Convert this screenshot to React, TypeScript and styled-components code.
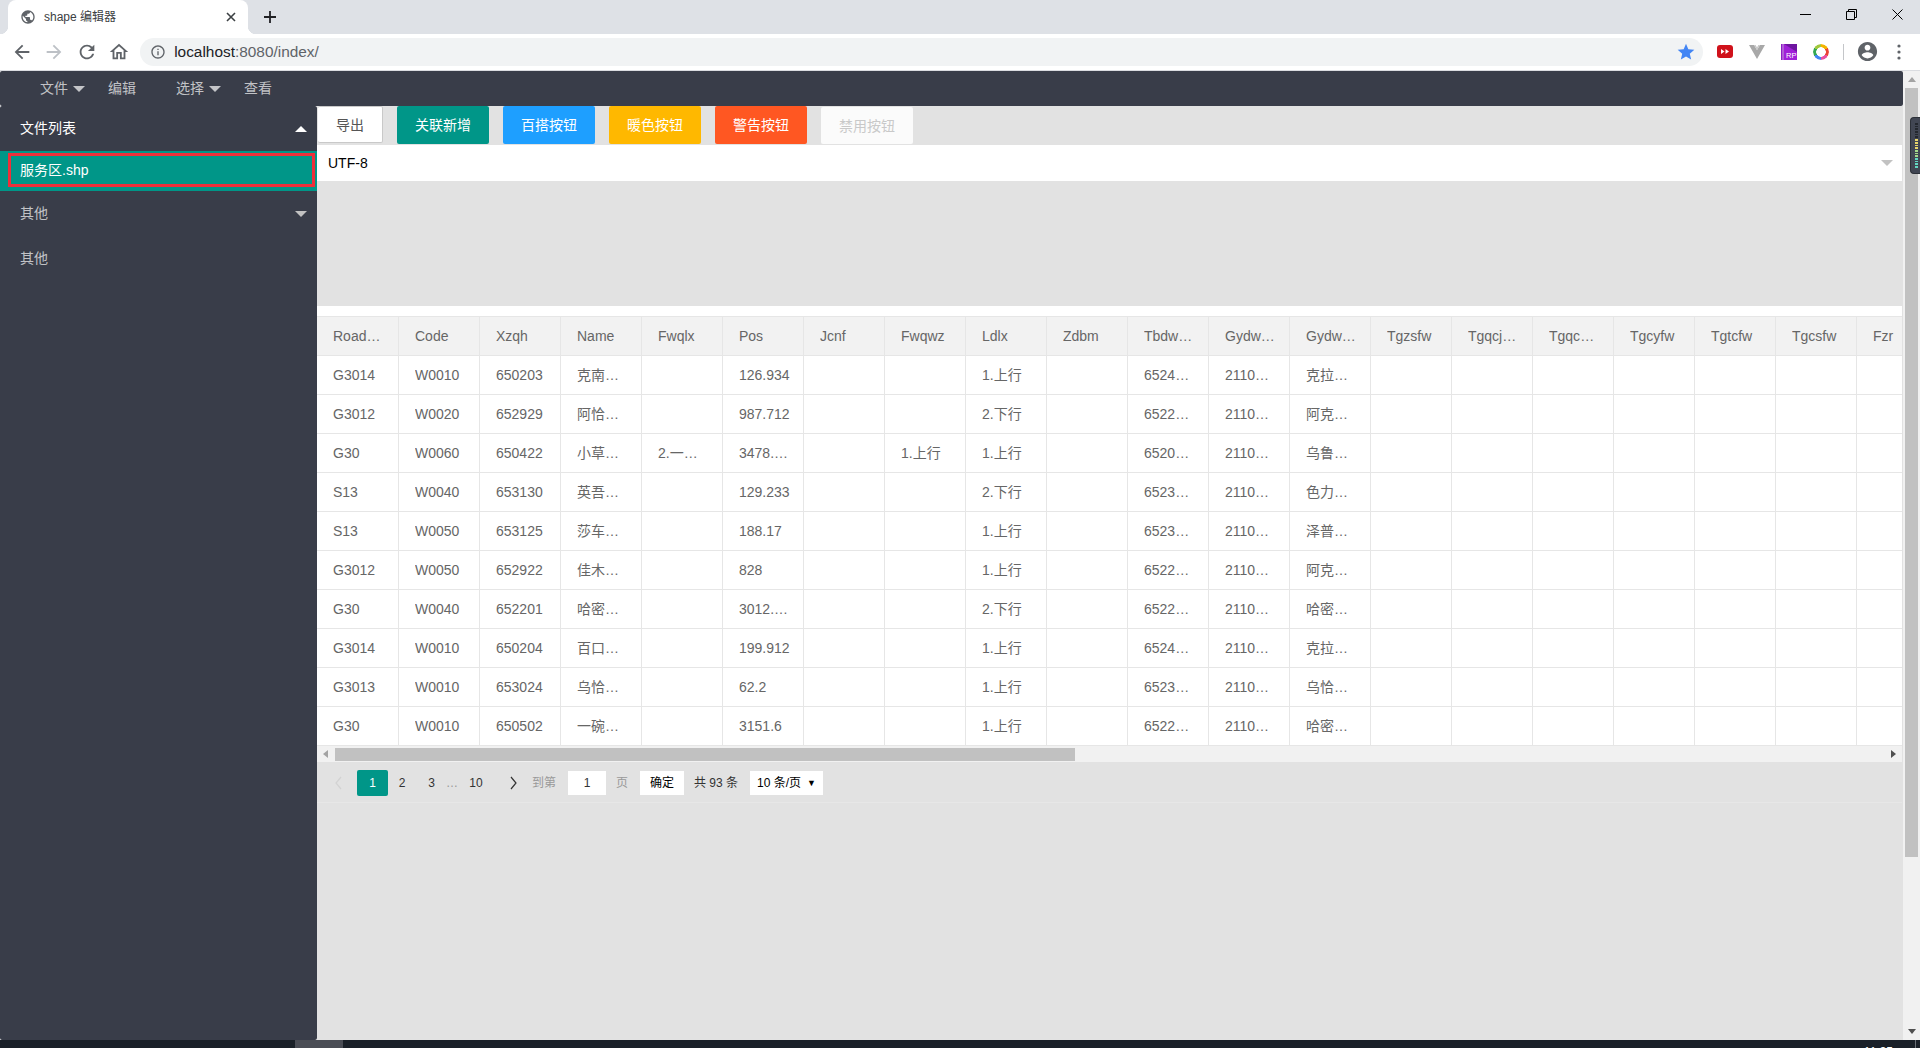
import * as React from "react";
import styled, { createGlobalStyle } from "styled-components";

// Table data
const columns = [
  "RoadCode", "Code", "Xzqh", "Name", "Fwqlx", "Pos", "Jcnf", "Fwqwz", "Ldlx", "Zdbm",
  "Tbdwdm", "Gydwdm", "Gydwmc", "Tgzsfw", "Tgqcjcfw", "Tgqcxfw", "Tgcyfw", "Tgtcfw", "Tgcsfw", "Fzr",
];

const rows = [
  { RoadCode: "G3014", Code: "W0010", Xzqh: "650203", Name: "克南服务区", Pos: "126.934", Ldlx: "1.上行", Tbdwdm: "652400000", Gydwdm: "211000000", Gydwmc: "克拉玛依公路局" },
  { RoadCode: "G3012", Code: "W0020", Xzqh: "652929", Name: "阿恰服务区", Pos: "987.712", Ldlx: "2.下行", Tbdwdm: "652200000", Gydwdm: "211000000", Gydwmc: "阿克苏公路局" },
  { RoadCode: "G30", Code: "W0060", Xzqh: "650422", Name: "小草湖服务区", Fwqlx: "2.一般服务区", Pos: "3478.256", Fwqwz: "1.上行", Ldlx: "1.上行", Tbdwdm: "652000000", Gydwdm: "211000000", Gydwmc: "乌鲁木齐公路局" },
  { RoadCode: "S13", Code: "W0040", Xzqh: "653130", Name: "英吾斯坦服务区", Pos: "129.233", Ldlx: "2.下行", Tbdwdm: "652300000", Gydwdm: "211000000", Gydwmc: "色力布亚公路局" },
  { RoadCode: "S13", Code: "W0050", Xzqh: "653125", Name: "莎车服务区", Pos: "188.17", Ldlx: "1.上行", Tbdwdm: "652300000", Gydwdm: "211000000", Gydwmc: "泽普公路局" },
  { RoadCode: "G3012", Code: "W0050", Xzqh: "652922", Name: "佳木服务区", Pos: "828", Ldlx: "1.上行", Tbdwdm: "652200000", Gydwdm: "211000000", Gydwmc: "阿克苏公路局" },
  { RoadCode: "G30", Code: "W0040", Xzqh: "652201", Name: "哈密服务区", Pos: "3012.455", Ldlx: "2.下行", Tbdwdm: "652200000", Gydwdm: "211000000", Gydwmc: "哈密公路局" },
  { RoadCode: "G3014", Code: "W0010", Xzqh: "650204", Name: "百口泉服务区", Pos: "199.912", Ldlx: "1.上行", Tbdwdm: "652400000", Gydwdm: "211000000", Gydwmc: "克拉玛依公路局" },
  { RoadCode: "G3013", Code: "W0010", Xzqh: "653024", Name: "乌恰服务区", Pos: "62.2", Ldlx: "1.上行", Tbdwdm: "652300000", Gydwdm: "211000000", Gydwmc: "乌恰公路局" },
  { RoadCode: "G30", Code: "W0010", Xzqh: "650502", Name: "一碗泉服务区", Pos: "3151.6", Ldlx: "1.上行", Tbdwdm: "652200000", Gydwdm: "211000000", Gydwmc: "哈密公路局" },
];

const actions = [
  { label: "关联新增", color: "#009688" },
  { label: "百搭按钮", color: "#1e9fff" },
  { label: "暖色按钮", color: "#ffb800" },
  { label: "警告按钮", color: "#ff5722" },
];

const meterBars = ["d", "d", "d", "d", "d", "d", "y", "y", "y", "y", "g", "g", "g", "t", "t", "t", "t"];
const meterColors: Record<string, string> = { d: "#23272e", y: "#e8d56a", g: "#a5d98a", t: "#62d6c2" };

const App = () => (
  <Page>
    <GlobalStyle />
    <TabStrip>
      <Tab>
        <Icon $size={16} $color="#5f6368" viewBox="0 0 24 24">
          <path d="M12 2C6.48 2 2 6.48 2 12s4.48 10 10 10 10-4.48 10-10S17.52 2 12 2zm-1 17.93c-3.95-.49-7-3.85-7-7.93 0-.62.08-1.21.21-1.79L9 15v1c0 1.1.9 2 2 2v1.93zm6.9-2.54c-.26-.81-1-1.39-1.9-1.39h-1v-3c0-.55-.45-1-1-1H8v-2h2c.55 0 1-.45 1-1V7h2c1.1 0 2-.9 2-2v-.41c2.93 1.19 5 4.06 5 7.41 0 2.08-.8 3.97-2.1 5.39z" />
        </Icon>
        <TabTitle>shape 编辑器</TabTitle>
        <Icon $size={10} $color="#3c4043" viewBox="0 0 10 10">
          <path d="M1 1l8 8M9 1L1 9" stroke="#3c4043" strokeWidth="1.6" fill="none" />
        </Icon>
      </Tab>
      <NewTab>
        <Icon $size={14} $color="#202124" viewBox="0 0 14 14">
          <path d="M7 1v12M1 7h12" stroke="#202124" strokeWidth="1.8" fill="none" />
        </Icon>
      </NewTab>
      <WindowControls>
        <WindowButton>
          <svg width="11" height="11" viewBox="0 0 11 11"><path d="M0 5.5h11" stroke="#000" fill="none" /></svg>
        </WindowButton>
        <WindowButton>
          <svg width="11" height="11" viewBox="0 0 11 11"><path d="M.5 2.5h8v8h-8zM2.5 2.5v-2h8v8h-2" stroke="#000" fill="none" /></svg>
        </WindowButton>
        <WindowButton>
          <svg width="11" height="11" viewBox="0 0 11 11"><path d="M.5.5l10 10M10.5.5l-10 10" stroke="#000" fill="none" /></svg>
        </WindowButton>
      </WindowControls>
    </TabStrip>

    <BrowserBar>
      <NavButton>
        <Icon $size={22} $color="#5f6368" viewBox="0 0 24 24">
          <path d="M20 11H7.83l5.59-5.59L12 4l-8 8 8 8 1.41-1.41L7.83 13H20v-2z" />
        </Icon>
      </NavButton>
      <NavButton>
        <Icon $size={22} $color="#bdc1c6" viewBox="0 0 24 24">
          <path d="M4 11h12.17l-5.59-5.59L12 4l8 8-8 8-1.41-1.41L16.17 13H4v-2z" />
        </Icon>
      </NavButton>
      <NavButton>
        <Icon $size={22} $color="#5f6368" viewBox="0 0 24 24">
          <path d="M17.65 6.35A7.958 7.958 0 0 0 12 4c-4.42 0-7.99 3.58-7.99 8s3.57 8 7.99 8c3.73 0 6.84-2.55 7.73-6h-2.08A5.99 5.99 0 0 1 12 18c-3.31 0-6-2.69-6-6s2.69-6 6-6c1.66 0 3.14.69 4.22 1.78L13 11h7V4l-2.35 2.35z" />
        </Icon>
      </NavButton>
      <NavButton>
        <Icon $size={22} $color="#5f6368" viewBox="0 0 24 24">
          <path d="M12 5.69l5 4.5V18h-2v-6H9v6H7v-7.81l5-4.5M12 3L2 12h3v8h6v-6h2v6h6v-8h3L12 3z" />
        </Icon>
      </NavButton>
      <AddressBar>
        <Icon $size={16} $color="#5f6368" viewBox="0 0 24 24">
          <path d="M11 7h2v2h-2zm0 4h2v6h-2zm1-9C6.48 2 2 6.48 2 12s4.48 10 10 10 10-4.48 10-10S17.52 2 12 2zm0 18c-4.41 0-8-3.59-8-8s3.59-8 8-8 8 3.59 8 8-3.59 8-8 8z" />
        </Icon>
        <Url>
          localhost<UrlRest>:8080/index/</UrlRest>
        </Url>
        <Star $size={20} $color="#4285f4" viewBox="0 0 24 24">
          <path d="M12 17.27L18.18 21l-1.64-7.03L22 9.24l-7.19-.61L12 2 9.19 8.63 2 9.24l5.46 4.73L5.82 21z" />
        </Star>
      </AddressBar>
      <ExtensionSlot>
        <svg width="16" height="13" viewBox="0 0 16 13">
          <rect width="16" height="13" rx="3" fill="#d0121b" />
          <path d="M4 4l3.5 2.5L4 9zM8.5 4L12 6.5 8.5 9z" fill="#fff" />
        </svg>
      </ExtensionSlot>
      <ExtensionSlot>
        <svg width="16" height="14" viewBox="0 0 16 14">
          <path d="M0 0h5l3 5 3-5h5L8 14z" fill="#a8a8a8" />
          <path d="M5 0l3 5 3-5h-1.6L8 2.4 6.6 0z" fill="#c8c8c8" />
        </svg>
      </ExtensionSlot>
      <ExtensionSlot>
        <svg width="16" height="16" viewBox="0 0 16 16">
          <rect width="16" height="16" fill="#8a1fc2" />
          <path d="M3 0h13v16H3z" fill="#a020d8" />
          <path d="M3 0l13 8V0z" fill="#6e16a0" />
          <path d="M2 0v16" stroke="#e9c4f5" strokeWidth=".8" />
          <text x="5" y="14" fontSize="7.5" fontFamily="Liberation Sans, sans-serif" fill="#fff">RP</text>
        </svg>
      </ExtensionSlot>
      <ExtensionSlot>
        <ColorRing />
      </ExtensionSlot>
      <BarDivider />
      <ExtensionSlot>
        <Icon $size={23} $color="#5f6368" viewBox="0 0 24 24">
          <path d="M12 2C6.48 2 2 6.48 2 12s4.48 10 10 10 10-4.48 10-10S17.52 2 12 2zm0 3c1.66 0 3 1.34 3 3s-1.34 3-3 3-3-1.34-3-3 1.34-3 3-3zm0 14.2c-2.5 0-4.71-1.28-6-3.22.03-1.99 4-3.08 6-3.08 1.99 0 5.97 1.09 6 3.08-1.29 1.94-3.5 3.22-6 3.22z" />
        </Icon>
      </ExtensionSlot>
      <ExtensionSlot>
        <svg width="4" height="16" viewBox="0 0 4 16">
          <circle cx="2" cy="2" r="1.6" fill="#5f6368" />
          <circle cx="2" cy="8" r="1.6" fill="#5f6368" />
          <circle cx="2" cy="14" r="1.6" fill="#5f6368" />
        </svg>
      </ExtensionSlot>
    </BrowserBar>

    <Viewport>
      <Content>
        <MenuBar>
          <MenuItem><MenuLabel>文件</MenuLabel><Caret $dir="down" $color="rgba(255,255,255,.7)" $gap={5} /></MenuItem>
          <MenuItem><MenuLabel>编辑</MenuLabel></MenuItem>
          <MenuItem><MenuLabel>选择</MenuLabel><Caret $dir="down" $color="rgba(255,255,255,.7)" $gap={5} /></MenuItem>
          <MenuItem><MenuLabel>查看</MenuLabel></MenuItem>
        </MenuBar>
        <Body>
          <Sidebar>
            <SideHead $active>
              <SideLabel>文件列表</SideLabel>
              <Caret $dir="up" $color="#fff" />
            </SideHead>
            <SideActive>
              <SideActiveInner>服务区.shp</SideActiveInner>
            </SideActive>
            <SideHead>
              <SideLabel>其他</SideLabel>
              <Caret $dir="down" $color="#c2c2c2" />
            </SideHead>
            <SideHead>
              <SideLabel>其他</SideLabel>
            </SideHead>
          </Sidebar>

          <Main>
            <ButtonRow>
              <PlainButton>导出</PlainButton>
              {actions.map((a) => (
                <ActionButton key={a.label} $color={a.color}>
                  {a.label}
                </ActionButton>
              ))}
              <DisabledButton>禁用按钮</DisabledButton>
            </ButtonRow>
            <EncodingSelect>
              UTF-8
              <Caret $dir="down" $color="#c2c2c2" />
            </EncodingSelect>
            <EmptyPanel />
            <TableBlock>
              <TableClip>
                <DataTable>
                  <colgroup>
                    {columns.map((c, i) => (
                      <col key={c} width={i === 0 ? 82 : 81} />
                    ))}
                  </colgroup>
                  <thead>
                    <tr>
                      {columns.map((c) => (
                        <HeadCell key={c}>
                          <CellText>{c}</CellText>
                        </HeadCell>
                      ))}
                    </tr>
                  </thead>
                  <tbody>
                    {rows.map((row, i) => (
                      <tr key={i}>
                        {columns.map((c) => (
                          <BodyCell key={c}>
                            <CellText>{(row as Record<string, string>)[c]}</CellText>
                          </BodyCell>
                        ))}
                      </tr>
                    ))}
                  </tbody>
                </DataTable>
              </TableClip>
              <TableScrollbar>
                <ScrollArrow>
                  <Caret $dir="left" $color="#a3a3a3" $small />
                </ScrollArrow>
                <TableThumb />
                <ScrollArrow>
                  <Caret $dir="right" $color="#505050" $small />
                </ScrollArrow>
              </TableScrollbar>
            </TableBlock>
            <Pagination>
              <PagerItem $w={37} $muted>
                <Icon $size={16} $color="none" viewBox="0 0 16 16">
                  <path d="M10 2L5 8l5 6" stroke="#d2d2d2" strokeWidth="1.2" fill="none" />
                </Icon>
              </PagerItem>
              <PagerCurrent>1</PagerCurrent>
              <PagerItem $w={28}>2</PagerItem>
              <PagerItem $w={31}>3</PagerItem>
              <PagerItem $w={10} $muted>…</PagerItem>
              <PagerItem $w={38}>10</PagerItem>
              <PagerItem $w={36}>
                <Icon $size={16} $color="none" viewBox="0 0 16 16">
                  <path d="M6 2l5 6-5 6" stroke="#333" strokeWidth="1.2" fill="none" />
                </Icon>
              </PagerItem>
              <PagerLabel $left={1}>到第</PagerLabel>
              <PagerInput>1</PagerInput>
              <PagerLabel $left={10}>页</PagerLabel>
              <PagerConfirm>确定</PagerConfirm>
              <PagerCount>共 93 条</PagerCount>
              <PagerSize>
                10 条/页
                <SizeMark>▼</SizeMark>
              </PagerSize>
            </Pagination>
          </Main>
        </Body>
      </Content>

      <PageScrollbar>
        <PageArrow>
          <Caret $dir="up" $color="#a3a3a3" $small />
        </PageArrow>
        <PageThumb />
        <PageArrow>
          <Caret $dir="down" $color="#505050" $small />
        </PageArrow>
      </PageScrollbar>

      <MeterWidget>
        {meterBars.map((b, i) => (
          <MeterBar key={i} $color={meterColors[b]} />
        ))}
      </MeterWidget>
    </Viewport>

    <Taskbar>
      <TaskbarApp />
      <TaskbarClock>11:35</TaskbarClock>
      <TaskbarEdge />
    </Taskbar>
  </Page>
);

// Styling
const GlobalStyle = createGlobalStyle`
  html, body {
    margin: 0;
    padding: 0;
    height: 100%;
    overflow: hidden;
    background: #fff;
    font-family: "Liberation Sans", "Noto Sans CJK SC", sans-serif;
    line-height: 20px;
  }
  * {
    box-sizing: border-box;
  }
`;

const Page = styled.div`
  width: 1920px;
  height: 1048px;
  display: flex;
  flex-direction: column;
  overflow: hidden;
`;

const Icon = styled.svg<{ $size: number; $color: string }>`
  width: ${(p) => p.$size}px;
  height: ${(p) => p.$size}px;
  flex: none;
  fill: ${(p) => p.$color};
`;

const Caret = styled.i<{ $dir: "up" | "down" | "left" | "right"; $color: string; $gap?: number; $small?: boolean }>`
  display: inline-block;
  flex: none;
  width: 0;
  height: 0;
  margin-left: ${(p) => p.$gap ?? 0}px;
  ${(p) => {
    const w = p.$small ? 4 : 6;
    const h = p.$small ? 5 : 6;
    const side = `${w}px solid transparent`;
    const solid = `${h}px solid ${p.$color}`;
    if (p.$dir === "up") return `border-left: ${side}; border-right: ${side}; border-bottom: ${solid};`;
    if (p.$dir === "down") return `border-left: ${side}; border-right: ${side}; border-top: ${solid};`;
    if (p.$dir === "left") return `border-top: ${side}; border-bottom: ${side}; border-right: ${solid};`;
    return `border-top: ${side}; border-bottom: ${side}; border-left: ${solid};`;
  }}
`;

const TabStrip = styled.div`
  height: 34px;
  flex: none;
  display: flex;
  align-items: stretch;
  background: #dee1e6;
  padding-left: 8px;
`;

const Tab = styled.div`
  position: relative;
  width: 240px;
  background: #fff;
  border-radius: 8px 8px 0 0;
  display: flex;
  align-items: center;
  padding: 0 12px 0 12px;

  &::before,
  &::after {
    content: "";
    position: absolute;
    bottom: 0;
    width: 8px;
    height: 8px;
  }
  &::before {
    left: -8px;
    background: radial-gradient(circle at 0 0, transparent 8px, #fff 8.5px);
  }
  &::after {
    right: -8px;
    background: radial-gradient(circle at 100% 0, transparent 8px, #fff 8.5px);
  }
`;

const TabTitle = styled.span`
  flex: 1;
  margin-left: 8px;
  font-size: 12px;
  color: #3c4043;
`;

const NewTab = styled.div`
  width: 28px;
  margin-left: 8px;
  display: flex;
  align-items: center;
  justify-content: center;
`;

const WindowControls = styled.div`
  margin-left: auto;
  display: flex;
`;

const WindowButton = styled.div`
  width: 46px;
  height: 28px;
  display: flex;
  align-items: center;
  justify-content: center;
`;

const BrowserBar = styled.div`
  height: 37px;
  flex: none;
  display: flex;
  align-items: center;
  padding: 0 5px 1px 6px;
  background: #fff;
  border-bottom: 1px solid #dadce0;
`;

const NavButton = styled.div`
  width: 32.3px;
  height: 28px;
  flex: none;
  display: flex;
  align-items: center;
  justify-content: center;
`;

const AddressBar = styled.div`
  flex: 1;
  height: 28px;
  margin: 0 6px 0 5px;
  padding: 0 7px 0 10px;
  background: #f1f3f4;
  border-radius: 14px;
  display: flex;
  align-items: center;
`;

const Url = styled.span`
  margin-left: 8px;
  font-size: 15.4px;
  color: #202124;
`;

const UrlRest = styled.span`
  color: #5f6368;
`;

const Star = styled(Icon)`
  margin-left: auto;
`;

const ExtensionSlot = styled.div`
  width: 32px;
  height: 28px;
  flex: none;
  display: flex;
  align-items: center;
  justify-content: center;
`;

const ColorRing = styled.div`
  width: 16px;
  height: 16px;
  border-radius: 50%;
  background: conic-gradient(#f4b400 0 60deg, #ea4335 60deg 120deg, #e84fa0 120deg 180deg, #4285f4 180deg 240deg, #34a853 240deg 300deg, #a0c83c 300deg);
  mask: radial-gradient(circle, transparent 4.5px, #000 5px);
`;

const BarDivider = styled.div`
  width: 1px;
  height: 16px;
  margin: 0 7px 0 6px;
  flex: none;
  background: #c4c6c9;
`;

const Viewport = styled.div`
  position: relative;
  flex: 1;
  min-height: 0;
  display: flex;
`;

const Content = styled.div`
  width: 1903px;
  display: flex;
  flex-direction: column;
`;

const MenuBar = styled.div`
  height: 35px;
  flex: none;
  display: flex;
  align-items: center;
  padding-left: 40px;
  background: #393d49;
  border-radius: 2px;
`;

const MenuItem = styled.div`
  width: 68px;
  display: flex;
  align-items: center;
  font-size: 14px;
  color: rgba(255, 255, 255, 0.7);
`;

const MenuLabel = styled.span`
  margin-bottom: 2px;
`;

const Body = styled.div`
  flex: 1;
  min-height: 0;
  display: flex;
`;

const Sidebar = styled.div`
  width: 317px;
  flex: none;
  background: #393d49;
  border-radius: 2px;
`;

const SideHead = styled.div<{ $active?: boolean }>`
  height: 45px;
  display: flex;
  align-items: center;
  justify-content: space-between;
  padding: 0 10px 0 20px;
  font-size: 14px;
  color: ${(p) => (p.$active ? "#fff" : "rgba(255, 255, 255, 0.7)")};
`;

const SideLabel = styled.span`
  margin-bottom: 2px;
`;

const SideActive = styled.div`
  height: 40px;
  padding: 2px 2px 4px 8px;
  background: #009688;
`;

const SideActiveInner = styled.div`
  height: 100%;
  display: flex;
  align-items: center;
  padding-left: 9px;
  font-size: 14px;
  color: #fff;
  border: 3px solid #ee2f3a;
`;

const Main = styled.div`
  flex: 1;
  min-width: 0;
  display: flex;
  flex-direction: column;
  padding-right: 1px;
  background: #e2e2e2;
`;

const ButtonRow = styled.div`
  height: 39px;
  flex: none;
  display: flex;
  align-items: flex-start;
  gap: 14px;
  padding-left: 1px;
`;

const PlainButton = styled.div`
  width: 65px;
  height: 37px;
  display: flex;
  align-items: center;
  justify-content: center;
  background: #fff;
  border: 1px solid #c9c9c9;
  border-width: 1px 1px 1px 0;
  border-radius: 2px;
  font-size: 14px;
  color: #555;
`;

const ActionButton = styled.div<{ $color: string }>`
  width: 92px;
  height: 38px;
  display: flex;
  align-items: center;
  justify-content: center;
  background: ${(p) => p.$color};
  border-radius: 2px;
  font-size: 14px;
  color: #fff;
`;

const DisabledButton = styled(ActionButton).attrs({ $color: "#fbfbfb" })`
  height: 37px;
  margin-top: 1px;
  color: #c9c9c9;
`;

const EncodingSelect = styled.div`
  height: 36px;
  flex: none;
  display: flex;
  align-items: center;
  justify-content: space-between;
  padding: 0 9px 0 11px;
  background: #fff;
  font-size: 14px;
  color: #000;
`;

const EmptyPanel = styled.div`
  height: 125px;
  flex: none;
`;

const TableBlock = styled.div`
  flex: none;
  padding-top: 10px;
  background: #fff;
`;

const TableClip = styled.div`
  overflow: hidden;
  border-top: 1px solid #e6e6e6;
`;

const DataTable = styled.table`
  width: 1621px;
  table-layout: fixed;
  border-collapse: separate;
  border-spacing: 0;
  font-size: 14px;
  color: #666;
`;

const HeadCell = styled.th`
  height: 39px;
  padding: 0 13px 0 16px;
  background: #f2f2f2;
  font-weight: 400;
  text-align: left;
  border-right: 1px solid #e6e6e6;
  border-bottom: 1px solid #e6e6e6;
`;

const BodyCell = styled.td`
  height: 39px;
  padding: 0 13px 0 16px;
  border-right: 1px solid #e6e6e6;
  border-bottom: 1px solid #e6e6e6;
`;

const CellText = styled.div`
  overflow: hidden;
  white-space: nowrap;
  text-overflow: ellipsis;
  line-height: 20px;
`;

const TableScrollbar = styled.div`
  height: 16px;
  display: flex;
  align-items: center;
  justify-content: space-between;
  background: #f1f1f1;
`;

const ScrollArrow = styled.div`
  width: 17px;
  height: 16px;
  display: flex;
  align-items: center;
  justify-content: center;
`;

const TableThumb = styled.div`
  width: 740px;
  height: 13px;
  margin: 1px auto 0 1px;
  background: #c1c1c1;
`;

const Pagination = styled.div`
  height: 41px;
  flex: none;
  display: flex;
  align-items: center;
  padding: 1px 0 0 3px;
  border-bottom: 1px solid #e7e7e7;
  font-size: 12px;
  color: #333;
`;

const PagerItem = styled.div<{ $w: number; $muted?: boolean }>`
  width: ${(p) => p.$w}px;
  flex: none;
  display: flex;
  align-items: center;
  justify-content: center;
  color: ${(p) => (p.$muted ? "#999" : "#333")};
`;

const PagerCurrent = styled.div`
  width: 31px;
  height: 26px;
  flex: none;
  display: flex;
  align-items: center;
  justify-content: center;
  background: #009688;
  border-radius: 2px;
  color: #fff;
`;

const PagerLabel = styled.span<{ $left: number }>`
  margin-left: ${(p) => p.$left}px;
  color: #999;
`;

const PagerInput = styled.div`
  width: 38px;
  height: 24px;
  margin-left: 12px;
  display: flex;
  align-items: center;
  justify-content: center;
  background: #fff;
`;

const PagerConfirm = styled.div`
  width: 44px;
  height: 24px;
  margin-left: 12px;
  display: flex;
  align-items: center;
  justify-content: center;
  background: #fff;
  color: #000;
`;

const PagerCount = styled.span`
  margin-left: 10px;
`;

const PagerSize = styled.div`
  width: 73px;
  height: 24px;
  margin-left: 12px;
  padding-left: 7px;
  display: flex;
  align-items: center;
  justify-content: space-between;
  background: #fff;
  color: #000;
`;

const SizeMark = styled.span`
  width: 16px;
  font-size: 9px;
`;

const PageScrollbar = styled.div`
  flex: 1;
  display: flex;
  flex-direction: column;
  align-items: center;
  background: #f1f1f1;
`;

const PageArrow = styled.div`
  height: 17px;
  flex: none;
  display: flex;
  align-items: center;
  justify-content: center;
`;

const PageThumb = styled.div`
  width: 13px;
  height: 769px;
  margin-bottom: auto;
  background: #c1c1c1;
`;

const MeterWidget = styled.div`
  position: absolute;
  top: 46px;
  right: 0;
  width: 10px;
  height: 57px;
  padding: 5px 2px 0 4px;
  display: flex;
  flex-direction: column;
  gap: 1px;
  background: #414653;
  border: 1px solid #2c3038;
  border-right: 0;
  border-radius: 4px 0 0 4px;
`;

const MeterBar = styled.i<{ $color: string }>`
  display: block;
  flex: none;
  height: 1.7px;
  background: ${(p) => p.$color};
`;

const Taskbar = styled.div`
  height: 8px;
  flex: none;
  display: flex;
  padding-left: 295px;
  overflow: hidden;
  background: #1a2028;
`;

const TaskbarApp = styled.div`
  width: 48px;
  background: #4a4d55;
`;

const TaskbarClock = styled.span`
  margin-left: auto;
  padding-top: 5px;
  font-size: 12px;
  line-height: 14px;
  color: #fff;
`;

const TaskbarEdge = styled.div`
  width: 1px;
  margin: 0 4px 0 22px;
  background: #6a6f76;
`;

export default App;
